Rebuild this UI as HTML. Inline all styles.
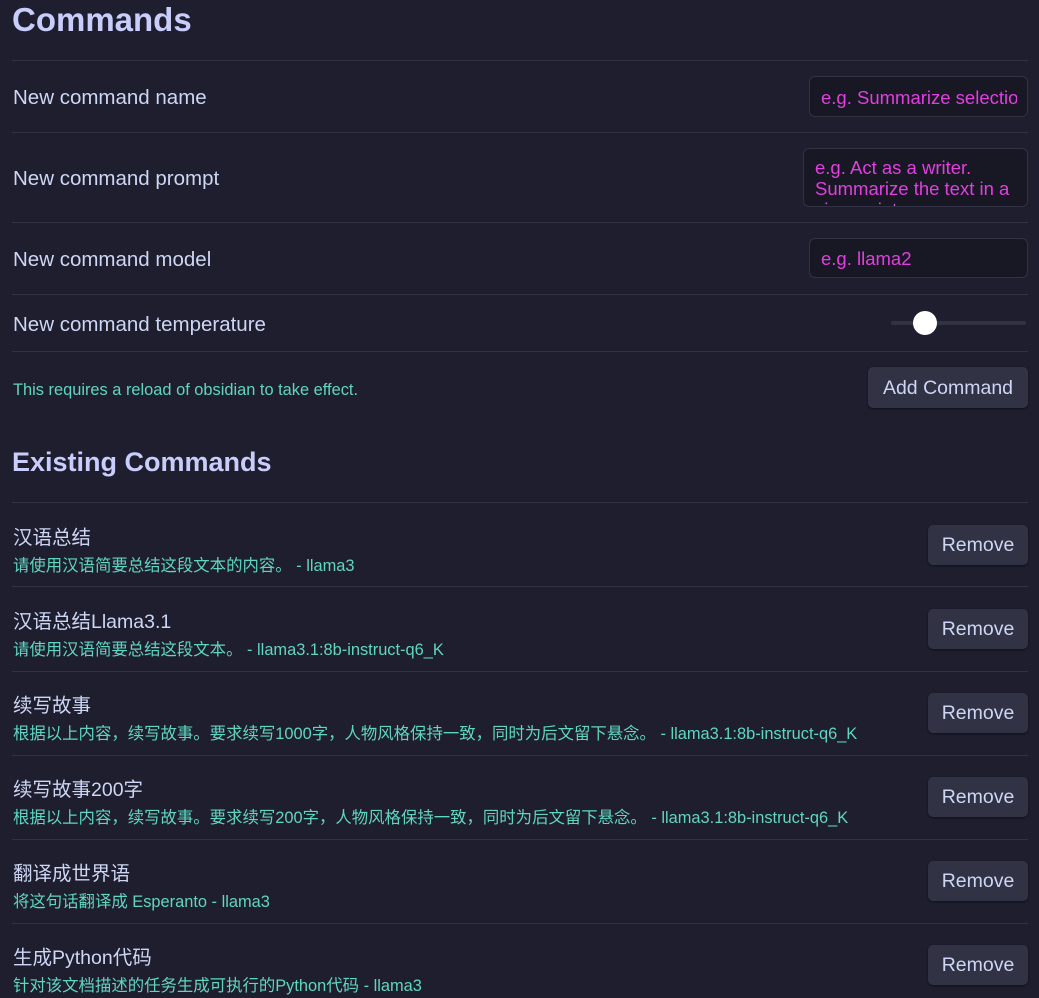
<!DOCTYPE html>
<html><head><meta charset="utf-8"><style>
*{margin:0;padding:0;box-sizing:border-box}
body{width:1039px;height:998px;overflow:hidden;background:#1e1e2e;font-family:"Liberation Sans","Noto Sans CJK SC",sans-serif;color:#cdd6f4;position:relative}
.h{position:absolute;left:12px;font-weight:bold;color:#c9cdfb}
.sep{position:absolute;left:12px;right:11px;height:1px;background:#313244}
.lbl{position:absolute;left:13px;font-size:20.5px;color:#cdd6f4}
.inp{position:absolute;background:#181825;border:1px solid #313244;border-radius:6px;color:#e23ee0;font-size:18.5px;padding:0 11px;overflow:hidden;white-space:nowrap}
.btn{position:absolute;right:11px;background:#313244;border-radius:5px;color:#cdd6f4;font-size:19.5px;text-align:center;box-shadow:0 1px 2px rgba(0,0,0,.5)}
.name{position:absolute;left:13px;font-size:19.5px;color:#cdd6f4}
.desc{position:absolute;left:13px;font-size:16.4px;color:#5fd6c2}
</style></head><body>
<div class="h" style="top:1px;font-size:33px">Commands</div>
<div class="sep" style="top:60px"></div>
<div class="lbl" style="top:86px">New command name</div>
<div class="inp" style="left:809px;top:76px;width:219px;height:41px;line-height:41px"><span style="display:block;width:196px;overflow:hidden">e.g. Summarize selection</span></div>
<div class="sep" style="top:132px"></div>
<div class="lbl" style="top:167px">New command prompt</div>
<div class="inp" style="left:803px;top:148px;width:225px;height:59px;white-space:normal;line-height:21px;padding-top:8px">e.g. Act as a writer. Summarize the text in a view points</div>
<div class="sep" style="top:222px"></div>
<div class="lbl" style="top:248px">New command model</div>
<div class="inp" style="left:809px;top:238px;width:219px;height:40px;line-height:40px">e.g. llama2</div>
<div class="sep" style="top:294px"></div>
<div class="lbl" style="top:313px">New command temperature</div>
<div style="position:absolute;left:891px;top:321px;width:135px;height:4px;background:#313244;border-radius:2px"></div>
<div style="position:absolute;left:913px;top:311px;width:24px;height:24px;background:#fff;border-radius:50%"></div>
<div class="sep" style="top:351px"></div>
<div class="desc" style="top:381px">This requires a reload of obsidian to take effect.</div>
<div class="btn" style="top:367px;width:160px;height:41px;line-height:42px">Add Command</div>
<div class="h" style="top:447px;font-size:27px">Existing Commands</div>

<div class="sep" style="top:502px"></div>
<div class="name" style="top:521px">汉语总结</div>
<div class="desc" style="top:552px">请使用汉语简要总结这段文本的内容。 - llama3</div>
<div class="btn" style="top:525px;width:100px;height:40px;line-height:41px">Remove</div>

<div class="sep" style="top:586px"></div>
<div class="name" style="top:605px">汉语总结Llama3.1</div>
<div class="desc" style="top:636px">请使用汉语简要总结这段文本。 - llama3.1:8b-instruct-q6_K</div>
<div class="btn" style="top:609px;width:100px;height:40px;line-height:41px">Remove</div>

<div class="sep" style="top:671px"></div>
<div class="name" style="top:689px">续写故事</div>
<div class="desc" style="top:720px">根据以上内容，续写故事。要求续写1000字，人物风格保持一致，同时为后文留下悬念。 - llama3.1:8b-instruct-q6_K</div>
<div class="btn" style="top:693px;width:100px;height:40px;line-height:41px">Remove</div>

<div class="sep" style="top:755px"></div>
<div class="name" style="top:773px">续写故事200字</div>
<div class="desc" style="top:804px">根据以上内容，续写故事。要求续写200字，人物风格保持一致，同时为后文留下悬念。 - llama3.1:8b-instruct-q6_K</div>
<div class="btn" style="top:777px;width:100px;height:40px;line-height:41px">Remove</div>

<div class="sep" style="top:839px"></div>
<div class="name" style="top:857px">翻译成世界语</div>
<div class="desc" style="top:888px">将这句话翻译成 Esperanto - llama3</div>
<div class="btn" style="top:861px;width:100px;height:40px;line-height:41px">Remove</div>

<div class="sep" style="top:923px"></div>
<div class="name" style="top:941px">生成Python代码</div>
<div class="desc" style="top:972px">针对该文档描述的任务生成可执行的Python代码 - llama3</div>
<div class="btn" style="top:945px;width:100px;height:40px;line-height:41px">Remove</div>
</body></html>
